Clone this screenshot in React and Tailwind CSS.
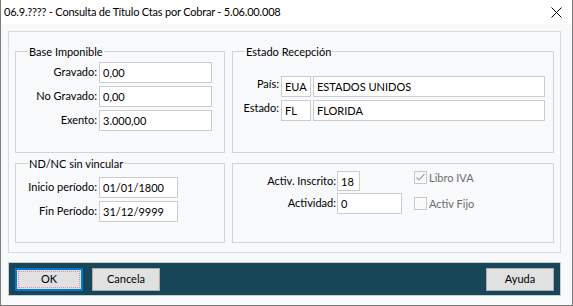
import React from 'react'

const Field = ({ w, h = 'h-[21px]', value }) => (
  <input
    readOnly
    value={value}
    className={`${w} ${h} border border-[#c9cdd1] bg-white px-[3px] text-[11px] text-black outline-none`}
  />
)

function Group({ title, className, children }) {
  return (
    <div className={`border border-[#d0d3d7] ${className}`}>
      {title && (
        <div className="-mt-[8px] ml-[12px] h-[15px] w-fit bg-[#f7f9fb] px-px leading-[15px]">{title}</div>
      )}
      {children}
    </div>
  )
}

function Check({ label, checked }) {
  return (
    <div className="flex h-[13px] items-center gap-[2px]">
      <div className="flex h-[13px] w-[13px] items-center justify-center border border-[#c6c8cb]">
        {checked && (
          <svg width="11" height="11" viewBox="0 0 11 11">
            <path d="M1.5 5.5 L4 8 L9.5 2" fill="none" stroke="#a6a6a6" strokeWidth="1.2" />
          </svg>
        )}
      </div>
      <span className="leading-[13px] text-[#6d6d6d]">{label}</span>
    </div>
  )
}

export default function App() {
  return (
    <div className="box-border flex h-[306px] w-[573px] flex-col border-x border-b border-[#7a7a7a] bg-[#f7f9fb] font-['Lato',sans-serif] text-[11px] text-black">
      {/* title bar */}
      <div className="flex h-[24px] items-center justify-between bg-white pl-[3px] pr-[10px]">
        <span className="text-[11px] tracking-[-0.2px]">06.9.???? - Consulta de Título Ctas por Cobrar - 5.06.00.008</span>
        <svg width="11" height="11" viewBox="0 0 11 11">
          <path d="M0.5 0.5 L10.5 10.5 M10.5 0.5 L0.5 10.5" stroke="#000" strokeWidth="1" />
        </svg>
      </div>

      {/* body panel */}
      <div className="ml-[7px] mt-[7px] box-border flex h-[222px] w-[553px] flex-col gap-[10px] border border-[#d7dadd] px-[6px] pb-[9px] pt-[19px]">
        <div className="flex gap-[7px]">
          <Group title="Base Imponible" className="h-[102px] w-[210px]">
            <div className="mt-[3px] grid grid-cols-[81px_113px] items-center gap-x-[2px] gap-y-[3px]">
              <span className="text-right">Gravado:</span>
              <Field w="w-[113px]" value="0,00" />
              <span className="text-right">No Gravado:</span>
              <Field w="w-[113px]" value="0,00" />
              <span className="text-right">Exento:</span>
              <Field w="w-[113px]" value="3.000,00" />
            </div>
          </Group>
          <Group title="Estado Recepción" className="h-[102px] w-[322px]">
            <div className="mt-[17px] grid grid-cols-[46px_30px_232px] items-start gap-x-[2px] gap-y-[3px]">
              <span className="text-right leading-[15px]">País:</span>
              <Field w="w-[30px]" value="EUA" />
              <Field w="w-[232px]" value="ESTADOS UNIDOS" />
              <span className="text-right leading-[15px]">Estado:</span>
              <Field w="w-[30px]" value="FL" />
              <Field w="w-[232px]" value="FLORIDA" />
            </div>
          </Group>
        </div>
        <div className="flex gap-[7px]">
          <Group title="ND/NC sin vincular" className="h-[80px] w-[210px]">
            <div className="mt-[6px] grid grid-cols-[81px_79px] items-center gap-x-[2px] gap-y-[3px]">
              <span className="text-right">Inicio período:</span>
              <Field w="w-[79px]" value="01/01/1800" />
              <span className="text-right">Fin Período:</span>
              <Field w="w-[79px]" value="31/12/9999" />
            </div>
          </Group>
          <Group className="flex h-[80px] w-[322px] items-start pt-[7px]">
            <div className="grid grid-cols-[103px_auto] items-center gap-x-[1px] gap-y-[2px]">
              <span className="text-right">Activ. Inscrito:</span>
              <Field w="w-[23px]" h="h-[20px]" value="18" />
              <span className="text-right">Actividad:</span>
              <Field w="w-[65px]" value="0" />
            </div>
            <div className="ml-[12px] flex flex-col gap-[13px]">
              <Check label="Libro IVA" checked />
              <Check label="Activ Fijo" />
            </div>
          </Group>
        </div>
      </div>

      {/* footer */}
      <div className="ml-[7px] mt-[9px] box-border flex h-[34px] w-[553px] items-start justify-between border border-[#c9cdd1] bg-[#174659] px-[6px] pt-[5px]">
        <div className="flex gap-[9px]">
          <button className="box-border h-[23px] w-[68px] border-2 border-[#0078d7] bg-[#e1e1e1] p-px">
            <div className="flex h-full w-full items-center justify-center border border-dotted border-[#e089ad]">OK</div>
          </button>
          <button className="box-border h-[23px] w-[68px] border border-[#adadad] bg-[#e1e1e1]">Cancela</button>
        </div>
        <button className="box-border h-[23px] w-[68px] border border-[#adadad] bg-[#e1e1e1]">Ayuda</button>
      </div>
    </div>
  )
}
